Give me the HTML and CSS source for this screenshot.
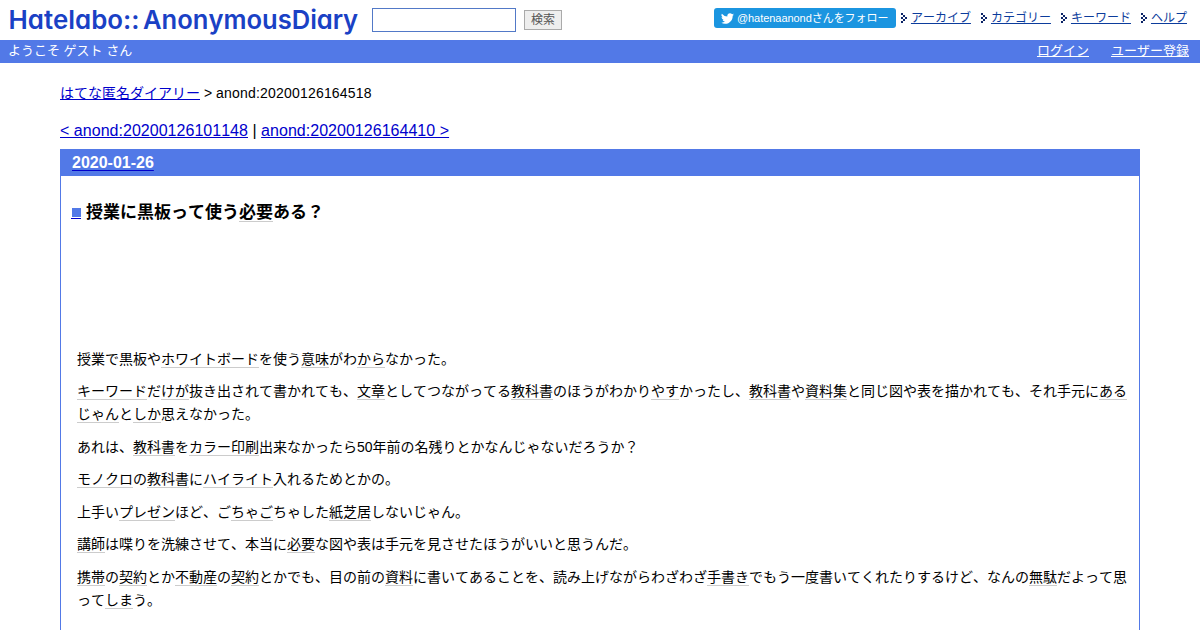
FILE: index.html
```html
<!DOCTYPE html>
<html lang="ja">
<head>
<meta charset="utf-8">
<title>授業に黒板って使う必要ある？</title>
<link rel="stylesheet" href="styles.css">
</head>
<body>
<svg class="symbols" aria-hidden="true">
  <symbol id="arrow" viewBox="0 0 6 10"><path d="M0 0h2v2h-2zM2 2h2v2h-2zM4 4h2v2h-2zM2 6h2v2h-2zM0 8h2v2h-2zM0 4h2v2h-2z"/></symbol>
</svg>
<header class="header">
  <a class="logo" href="#">
    <svg width="356" height="40" viewBox="0 0 356 40">
      <text x="0.5" y="29" textLength="131" lengthAdjust="spacingAndGlyphs">Hatelabo::</text>
      <text x="135" y="29" textLength="215" lengthAdjust="spacingAndGlyphs">AnonymousDiary</text>
    </svg>
  </a>
  <form class="search">
    <input class="search-input" type="text" aria-label="検索">
    <button class="search-button" type="button">検索</button>
  </form>
  <nav class="menu">
    <a class="follow" href="#"><svg class="bird" viewBox="0 0 24 24"><path d="M23.95 4.57a10 10 0 0 1-2.82.77 4.96 4.96 0 0 0 2.16-2.72c-.95.55-2 .95-3.13 1.18a4.92 4.92 0 0 0-8.38 4.48A13.9 13.9 0 0 1 1.64 3.16a4.92 4.92 0 0 0 1.52 6.57 4.9 4.9 0 0 1-2.23-.61v.06a4.92 4.92 0 0 0 3.95 4.83 5 5 0 0 1-2.21.08 4.94 4.94 0 0 0 4.6 3.42A9.87 9.87 0 0 1 0 19.54a13.99 13.99 0 0 0 7.56 2.21c9.05 0 14-7.5 14-13.98 0-.21 0-.42-.02-.63a9.9 9.9 0 0 0 2.41-2.57z"/></svg>@hatenaanondさんをフォロー</a>
    <span class="item"><svg class="arrow"><use href="#arrow"/></svg><a href="#">アーカイブ</a></span>
    <span class="item"><svg class="arrow"><use href="#arrow"/></svg><a href="#">カテゴリー</a></span>
    <span class="item"><svg class="arrow"><use href="#arrow"/></svg><a href="#">キーワード</a></span>
    <span class="item"><svg class="arrow"><use href="#arrow"/></svg><a href="#">ヘルプ</a></span>
  </nav>
</header>
<div class="userbar">
  <span>ようこそ ゲスト さん</span>
  <span class="account"><a href="#">ログイン</a><a href="#">ユーザー登録</a></span>
</div>
<main class="main">
  <div class="breadcrumb"><a href="#">はてな匿名ダイアリー</a> &gt; <span class="current">anond:20200126164518</span></div>
  <div class="pager"><a href="#">&lt; anond:20200126101148</a> | <a href="#">anond:20200126164410 &gt;</a></div>
  <article class="day">
    <h2 class="date"><a href="#">2020-01-26</a></h2>
    <h3 class="title"><a class="permalink" href="#"><span class="mark"></span></a><span>授業に黒板って使う<i>必要</i>ある？</span></h3>
    <div class="text">
      <p>授業で黒板や<i>ホワイトボード</i>を使う<i>意味</i>がわ<i>から</i>なかった。</p>
      <p><i>キーワード</i>だ<i>けが</i>抜き出されて書かれても、<i>文章</i>としてつながってる<i>教科書</i>のほうがわかり<i>やす</i>かったし、<i>教科書</i>や<i>資料集</i>と同じ図や表を描かれても、それ手元に<i>ある</i><br><i>じゃん</i>と<i>しか</i>思えなかった。</p>
      <p>あれは、<i>教科書</i>を<i>カラー印刷</i>出来なかったら50年前の名残りとかなんじゃないだろうか？</p>
      <p><i>モノクロ</i>の<i>教科書</i>に<i>ハイライト</i>入れるためとかの。</p>
      <p>上手い<i>プレゼン</i>ほど、ご<i>ちゃご</i>ちゃした<i>紙芝居</i>しないじゃん。</p>
      <p><i>講師</i>は喋りを洗練させて、本当に<i>必要</i>な図や表は手元を見させたほうがいいと思うんだ。</p>
      <p><i>携帯</i>の<i>契約</i>とか<i>不動産</i>の<i>契約</i>とかでも、目の前の<i>資料</i>に書いてあることを、読み上げながらわざわざ<i>手書き</i>でもう一度書いてくれたりするけど、なんの<i>無駄</i>だよって思<br>って<i>しま</i>う。</p>
    </div>
  </article>
</main>
</body>
</html>
```
FILE: styles.css
```css
* { box-sizing: border-box; }
html { overflow: hidden; }
body {
  display: flex;
  flex-direction: column;
  margin: 0;
  height: 630px;
  overflow: hidden;
  background: #fff;
  color: #000;
  font-family: "Liberation Sans", "Noto Sans CJK JP", sans-serif;
  font-size: 14px;
  font-kerning: none;
  text-spacing-trim: space-all;
}
a { color: #0000cc; text-underline-offset: 1px; text-decoration-thickness: 1px; text-decoration-skip-ink: none; }
.symbols { display: none; }
.header { display: flex; height: 40px; align-items: flex-start; }
.logo { display: block; width: 356px; height: 40px; margin-left: 8px; }
.logo text {
  font-family: Inter, sans-serif;
  font-size: 26px;
  font-weight: 600;
  font-feature-settings: "cv11";
  fill: #1a41c5;
}
.search { display: flex; gap: 8px; padding: 8px 0 0 8px; }
.search-input { width: 144px; height: 24px; border: 1px solid #5279c7; background: #fff; padding: 0; }
.search-button {
  width: 38px;
  height: 20px;
  margin-top: 2px;
  padding: 0;
  border: 1px solid #aaa;
  background: #eee;
  color: #555;
  font: 12px/17px "Liberation Sans", "Noto Sans CJK JP", sans-serif;
}
.menu { display: flex; margin-left: auto; padding: 8px 13px 0 0; font-size: 12px; line-height: 20px; white-space: nowrap; }
.follow {
  display: flex;
  align-items: center;
  width: 182px;
  height: 20px;
  margin-right: 5px;
  padding-left: 7px;
  border-radius: 3px;
  background: #1b95e0;
  color: #fff;
  font-size: 11px;
  letter-spacing: -0.05px;
  text-decoration: none;
}
.bird { width: 13px; height: 13px; margin-right: 3px; fill: #fff; }
.item { display: flex; align-items: center; min-width: 70px; margin-left: 10px; }
.item:last-child { min-width: 46px; }
.follow + .item { margin-left: 0; }
.item a { color: #0c3c9c; font-kerning: none; }
.arrow { width: 6px; height: 10px; margin-right: 4px; fill: #0b2467; shape-rendering: crispEdges; }
.userbar {
  display: flex;
  justify-content: space-between;
  height: 23px;
  padding: 0 11px 0 8px;
  background: #5279e7;
  color: #fff;
  font-size: 13px;
  line-height: 22px;
}
.userbar a { color: #fff; }
.account { display: flex; gap: 22px; }
.main { display: flex; flex: 1; flex-direction: column; min-height: 0; margin: 0 60px; }
.breadcrumb { height: 42px; padding-top: 20px; line-height: 20px; }
.current { letter-spacing: 0.2px; }
.pager { height: 44px; padding-top: 16px; font-size: 16px; line-height: 20px; letter-spacing: 0.03px; }
.day { flex: 1; min-height: 0; border: solid #5279e7; border-width: 1px 1px 0; }
.date { margin: 0; height: 26px; padding-left: 11px; background: #5279e7; font-size: 16px; line-height: 25px; }
.date a { color: #fff; text-decoration-color: #0000cc; text-underline-offset: 2px; }
.title { display: flex; align-items: center; gap: 5px; height: 28px; margin: 23px 0 0 10px; font-size: 17px; line-height: 28px; }
.permalink { width: 10px; height: 12px; border-bottom: 1px solid #0000cc; }
.mark { display: block; width: 9px; height: 9px; margin: 1px 0 0 1px; background: #5279e7; }
.text { margin: 121px 0 0 16px; line-height: 23px; white-space: nowrap; }
.text p { margin: 0 0 9.45px; }
i { font-style: normal; text-decoration: underline 1px #ccc; text-underline-offset: 3px; text-decoration-skip-ink: none; }
```
